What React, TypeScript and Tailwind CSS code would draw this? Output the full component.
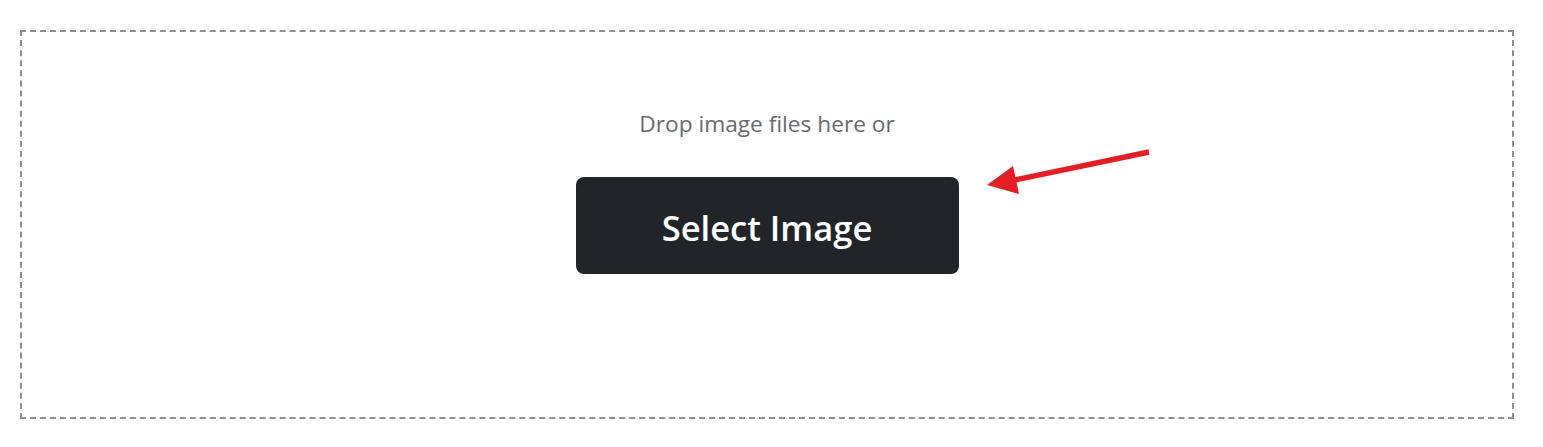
export default function App() {
  return (
    <div className="relative min-h-[447px] bg-white px-[20px] pt-[30px] font-['Open_Sans',sans-serif]">
      <div className="flex h-[389px] w-[1494px] flex-col items-center border-2 border-dashed border-[#909090] pt-[77px]">
        <p className="text-[22.7px] leading-[30px] text-[#666a6e]">Drop image files here or</p>
        <button className="mt-[38px] h-[97px] w-[383px] rounded-lg bg-[#212529] pt-[4px] text-[34.5px] font-semibold text-white">
          Select Image
        </button>
      </div>
      <svg
        className="absolute left-[980px] top-[140px]"
        width="180"
        height="60"
        viewBox="980 140 180 60"
      >
        <line x1="1149" y1="152" x2="1010" y2="181" stroke="#e31e24" strokeWidth="5.5" />
        <polygon points="987,185 1013,166 1019,194" fill="#e31e24" />
      </svg>
    </div>
  )
}
